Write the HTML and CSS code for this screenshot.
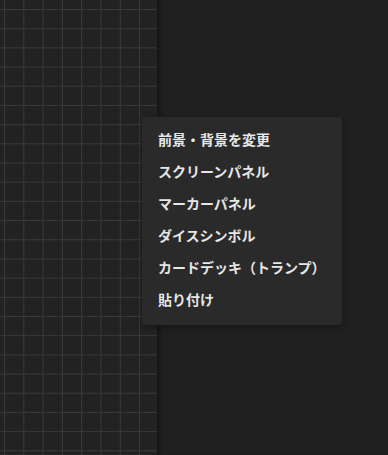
FILE: index.html
```html
<!DOCTYPE html>
<html lang="ja">
<head>
<meta charset="utf-8">
<link rel="stylesheet" href="styles.css">
</head>
<body>
<div class="app">
  <div class="canvas"></div>
  <div class="side"></div>
</div>
<ul class="menu">
  <li class="item">前景・背景を変更</li>
  <li class="item">スクリーンパネル</li>
  <li class="item">マーカーパネル</li>
  <li class="item">ダイスシンボル</li>
  <li class="item">カードデッキ（トランプ）</li>
  <li class="item">貼り付け</li>
</ul>
</body>
</html>
```
FILE: styles.css
```css
html, body {
  margin: 0;
  padding: 0;
  width: 388px;
  height: 455px;
  overflow: hidden;
  background: #202020;
  font-family: "Noto Sans CJK JP", "Noto Sans", sans-serif;
}
.app {
  display: flex;
  height: 455px;
}
.canvas {
  width: 157px;
  flex: none;
  background-color: #222222;
  background-image:
    linear-gradient(to right, #3a3a3a 1px, transparent 1px),
    linear-gradient(to bottom, #3a3a3a 1px, transparent 1px);
  background-size: 19.3px 19.2px;
  background-position: 4px 9px;
}
.side {
  flex: 1;
  background: #202020;
  box-shadow: inset 5px 0 4px -2px rgba(0,0,0,0.35);
}
.menu {
  position: absolute;
  left: 142px;
  top: 117px;
  width: 200px;
  margin: 0;
  padding: 8px 0;
  list-style: none;
  background: #2a2a2a;
  border-radius: 4px;
  box-shadow: 0 2px 6px rgba(0,0,0,0.3);
}
.item {
  box-sizing: border-box;
  height: 32px;
  line-height: 28px;
  padding: 0 0 4px 16px;
  font-size: 14px;
  font-weight: 700;
  color: #e6e6e6;
  white-space: nowrap;
}
```
